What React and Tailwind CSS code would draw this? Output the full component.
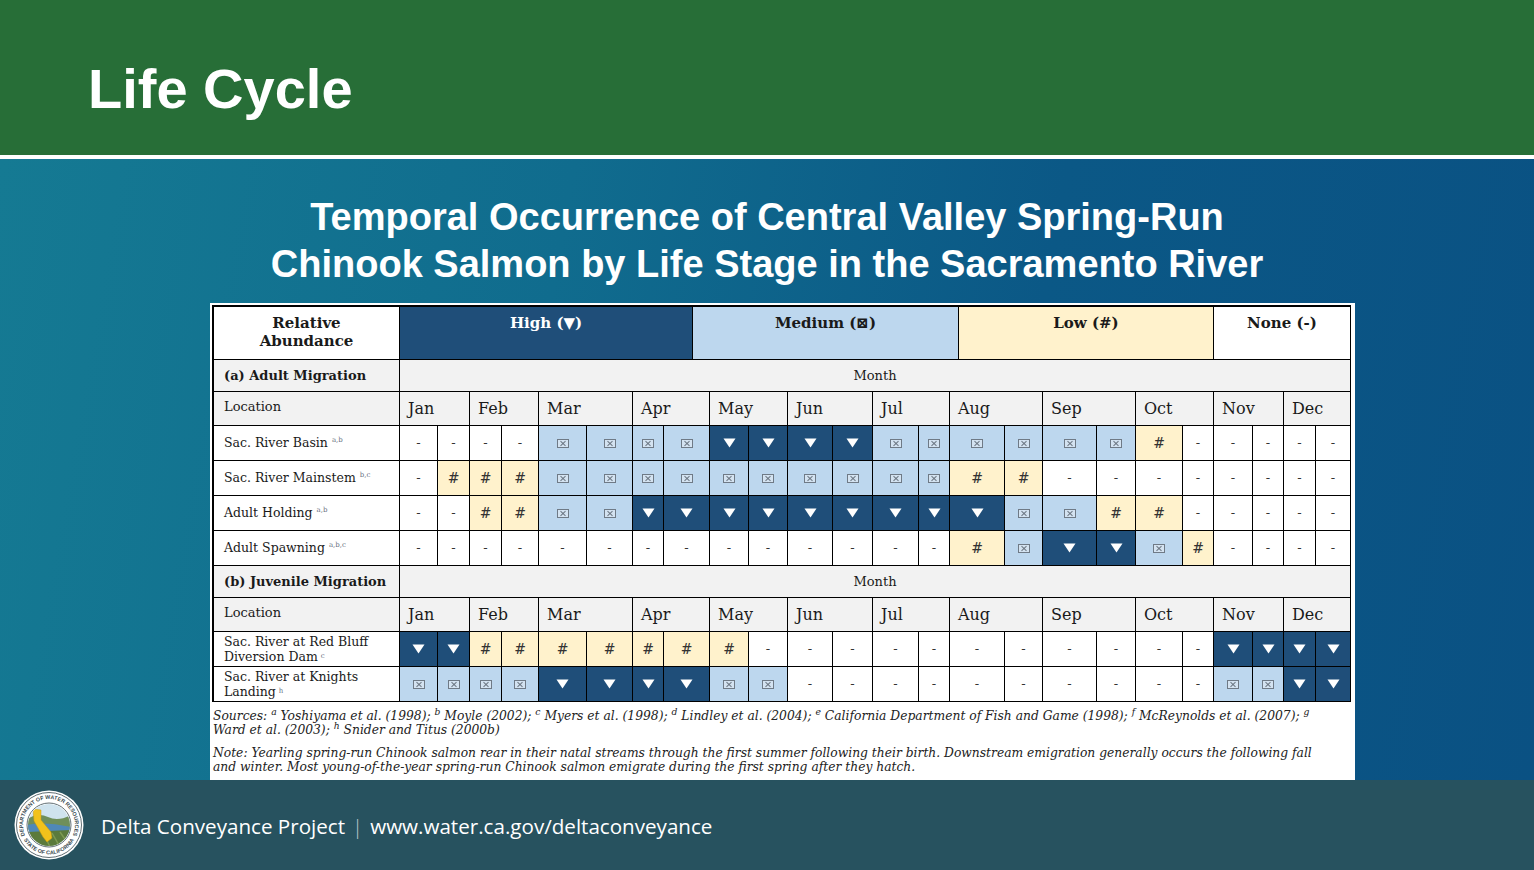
import React from "react";

const GRID =
  "grid grid-cols-[186px_38px_32px_32px_37px_48px_46px_31px_46px_39px_39px_45px_40px_46px_31px_55px_38px_54px_39px_47px_31px_39px_31px_32px_35px]";

const MONTHS = ["Jan", "Feb", "Mar", "Apr", "May", "Jun", "Jul", "Aug", "Sep", "Oct", "Nov", "Dec"];

const BG = {
  H: "bg-[#1f4e79]",
  M: "bg-[#bdd7ee]",
  L: "bg-[#fff2cc]",
  N: "bg-white",
};

const ADULT = [
  { name: "Sac. River Basin", sup: "a,b", data: "NNNNMMMMHHHHMMMMMMLNNNNN" },
  { name: "Sac. River Mainstem", sup: "b,c", data: "NLLLMMMMMMMMMMLLNNNNNNNN" },
  { name: "Adult Holding", sup: "a,b", data: "NNLLMMHHHHHHHHHMMLLNNNNN" },
  { name: "Adult Spawning", sup: "a,b,c", data: "NNNNNNNNNNNNNNLMHHMLNNNN" },
];

const JUVENILE = [
  { l1: "Sac. River at Red Bluff", l2: "Diversion Dam", sup: "c", data: "HHLLLLLLLNNNNNNNNNNNHHHH" },
  { l1: "Sac. River at Knights", l2: "Landing", sup: "h", data: "MMMMHHHHMMNNNNNNNNNNMMHH" },
];

const Tri = () => (
  <svg width="13" height="10" viewBox="0 0 13 10">
    <path d="M0.5 0.5H12.5L6.5 9.5Z" fill="#fff" />
  </svg>
);

const Box = () => (
  <svg width="12" height="9" viewBox="0 0 12 9">
    <rect x="0.5" y="0.5" width="11" height="8" fill="#d4e3f1" stroke="#6f7a86" />
    <path d="M3.5 2.2L8.5 6.8M8.5 2.2L3.5 6.8" stroke="#6f7a86" strokeWidth="1.1" />
  </svg>
);

const Symbol = ({ k }) => {
  if (k === "H") return <Tri />;
  if (k === "M") return <Box />;
  if (k === "L") return <span className="text-[14px] text-[#333]">#</span>;
  return <span className="text-[13px] text-[#333]">-</span>;
};

const cell = "border-r border-b border-black";

const Section = ({ title, rows, twoLine }) => (
  <>
    <div className={`${cell} h-[32px] bg-[#f2f2f2] flex items-center pl-[10px] font-bold text-[13px]`}>
      {title}
    </div>
    <div className={`${cell} col-span-24 h-[32px] bg-[#f2f2f2] flex items-center justify-center text-[13px]`}>
      Month
    </div>
    <div className={`${cell} h-[34px] bg-[#f2f2f2] flex items-center pl-[10px] pb-[4px] text-[13px]`}>Location</div>
    {MONTHS.map((m) => (
      <div key={m} className={`${cell} col-span-2 h-[34px] bg-[#f2f2f2] flex items-center pl-[8px] text-[16px]`}>
        {m}
      </div>
    ))}
    {rows.map((r, i) => (
      <React.Fragment key={i}>
        {twoLine ? (
          <div className={`${cell} h-[35px] bg-white flex flex-col justify-center pl-[10px] text-[12.5px] leading-[15px]`}>
            <span>{r.l1}</span>
            <span>
              {r.l2}
              <sup className="text-[7px] text-gray-500 ml-[3px]">{r.sup}</sup>
            </span>
          </div>
        ) : (
          <div className={`${cell} h-[35px] bg-white flex items-center pl-[10px] text-[12.5px]`}>
            {r.name}
            <sup className="text-[7px] text-gray-500 ml-[4px]">{r.sup}</sup>
          </div>
        )}
        {r.data.split("").map((k, j) => (
          <div key={j} className={`${cell} h-[35px] ${BG[k]} flex items-center justify-center`}>
            <Symbol k={k} />
          </div>
        ))}
      </React.Fragment>
    ))}
  </>
);

const Seal = () => (
  <svg width="70" height="70" viewBox="0 0 70 70">
    <defs>
      <path id="topArc" d="M12.5 48 A26 26 0 1 1 57.5 48" />
      <path id="botArc" d="M7 43 A29 29 0 0 0 63 43" />
      <clipPath id="inner">
        <circle cx="35" cy="35" r="21" />
      </clipPath>
    </defs>
    <circle cx="35" cy="35" r="34.5" fill="#fff" />
    <circle cx="35" cy="35" r="32.5" fill="#fff" stroke="#3a4a50" strokeWidth="0.8" />
    <text fontSize="5.4" fontFamily="Liberation Sans, sans-serif" fontWeight="bold" fill="#3a4a50">
      <textPath href="#topArc" startOffset="50%" textAnchor="middle">
        DEPARTMENT OF WATER RESOURCES
      </textPath>
    </text>
    <text fontSize="5.4" fontFamily="Liberation Sans, sans-serif" fontWeight="bold" fill="#3a4a50">
      <textPath href="#botArc" startOffset="50%" textAnchor="middle">
        STATE OF CALIFORNIA
      </textPath>
    </text>
    <circle cx="35" cy="35" r="22" fill="#fff" stroke="#3a4a50" strokeWidth="0.8" />
    <g clipPath="url(#inner)">
      <rect x="13" y="13" width="44" height="44" fill="#cfe3ee" />
      <path d="M13 29 Q24 22 34 27 T57 25 V40 H13Z" fill="#6f8f5a" />
      <path d="M13 35 Q30 31 57 37 V44 H13Z" fill="#4f88b8" />
      <path d="M13 42 L57 40 V57 H13Z" fill="#5b7a3c" />
      <path d="M30 44 L36 57 M38 43 L46 57 M46 42 L55 55" stroke="#7d9a52" strokeWidth="1.5" />
      <path d="M19 19 L27 20 L27 30 L37 42 L38 48 L33 52 L29 47 L24 38 L20 31Z" fill="#f2c21b" stroke="#c99a10" strokeWidth="0.5" />
    </g>
  </svg>
);

export default function App() {
  return (
    <div className="w-[1534px] h-[870px] flex flex-col overflow-hidden font-['Liberation_Sans',Arial,sans-serif]">
      {/* Header */}
      <div className="h-[155px] bg-[#276e37] pl-[88px] pt-[61px]">
        <h1 className="text-white text-[56px] font-bold leading-none">Life Cycle</h1>
      </div>
      <div className="h-[4px] bg-white" />

      {/* Main */}
      <div className="flex-1 flex flex-col bg-[linear-gradient(100deg,#157a93_0%,#106c8e_35%,#0b5886_65%,#0a5183_100%)]">
        <h2 className="pt-[35px] text-center text-white text-[38px] leading-[47px] font-bold">
          Temporal Occurrence of Central Valley Spring-Run
          <br />
          Chinook Salmon by Life Stage in the Sacramento River
        </h2>

        <div className="mt-[15px] ml-[210px] w-[1145px] flex-1 bg-white pt-[2px] pl-[2px] font-['DejaVu_Serif',serif] text-[#1a1a1a]">
          {/* Legend */}
          <div className="flex border-t-2 border-l-2 border-black w-[1139px]">
            <div className={`${cell} w-[186px] h-[53px] pt-[7px] text-center font-bold text-[15px] leading-[18px]`}>
              Relative
              <br />
              Abundance
            </div>
            <div className={`${cell} w-[293px] h-[53px] pt-[7px] text-center font-bold text-[15px] leading-[18px] bg-[#1f4e79] text-white`}>
              High (▼)
            </div>
            <div className={`${cell} w-[266px] h-[53px] pt-[7px] text-center font-bold text-[15px] leading-[18px] bg-[#bdd7ee]`}>
              Medium (⊠)
            </div>
            <div className={`${cell} w-[255px] h-[53px] pt-[7px] text-center font-bold text-[15px] leading-[18px] bg-[#fff2cc]`}>
              Low (#)
            </div>
            <div className={`${cell} w-[137px] h-[53px] pt-[7px] text-center font-bold text-[15px] leading-[18px]`}>
              None (-)
            </div>
          </div>

          {/* Grid */}
          <div className={`${GRID} border-l-2 border-black w-[1139px]`}>
            <Section title="(a) Adult Migration" rows={ADULT} />
            <Section title="(b) Juvenile Migration" rows={JUVENILE} twoLine />
          </div>

          {/* Notes */}
          <div className="pt-[7px] pl-[1px] italic text-[12.3px] leading-[14px] text-[#222] whitespace-nowrap">
            <div>
              Sources: <sup>a</sup> Yoshiyama et al. (1998); <sup>b</sup> Moyle (2002); <sup>c</sup> Myers et al. (1998);{" "}
              <sup>d</sup> Lindley et al. (2004); <sup>e</sup> California Department of Fish and Game (1998); <sup>f</sup>{" "}
              McReynolds et al. (2007); <sup>g</sup>
            </div>
            <div>
              Ward et al. (2003); <sup>h</sup> Snider and Titus (2000b)
            </div>
            <div className="mt-[9px]">
              Note: Yearling spring-run Chinook salmon rear in their natal streams through the first summer following their
              birth. Downstream emigration generally occurs the following fall
            </div>
            <div>and winter. Most young-of-the-year spring-run Chinook salmon emigrate during the first spring after they hatch.</div>
          </div>
        </div>
      </div>

      {/* Footer */}
      <div className="h-[90px] bg-[#27525f] flex items-center pl-[14px] gap-[17px] text-white font-['Open_Sans',sans-serif] text-[20.6px]">
        <Seal />
        <div className="flex items-center pt-[3px]">
          <span>Delta Conveyance Project</span>
          <span className="mx-[7px] text-[#b8c8cc] font-light">|</span>
          <span>www.water.ca.gov/deltaconveyance</span>
        </div>
      </div>
    </div>
  );
}
